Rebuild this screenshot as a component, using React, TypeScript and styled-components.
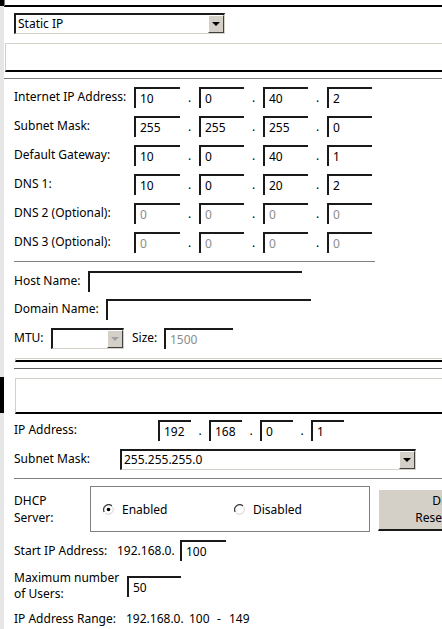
import React from 'react';
import styled, { createGlobalStyle } from 'styled-components';

const GlobalStyle = createGlobalStyle`
  html, body {
    margin: 0;
    padding: 0;
    background: #ffffff;
    overflow: hidden;
  }
  body {
    font-family: "Noto Sans", "Open Sans", sans-serif;
    font-size: 12px;
    color: #000000;
  }
`;

const Page = styled.div`
  display: flex;
  width: 442px;
  height: 629px;
  overflow: hidden;
`;

const Strip = styled.div`
  flex: none;
  width: 4px;
  background: #e6e6e6;
  display: flex;
  flex-direction: column;
`;

const StripMark = styled.div<{ $top: number; $h: number }>`
  margin-top: ${(p) => p.$top}px;
  height: ${(p) => p.$h}px;
  background: #000000;
`;

const Content = styled.div`
  flex: none;
  width: 640px;
  display: flex;
  flex-direction: column;
`;

const TopEdge = styled.div`
  height: 5px;
  border-left: 1px solid #808080;
  border-bottom: 2px solid #000000;
`;

const Panel = styled.div<{ $h: number; $left: number; $top: number }>`
  box-sizing: border-box;
  height: ${(p) => p.$h}px;
  margin-left: ${(p) => p.$left}px;
  margin-top: ${(p) => p.$top}px;
  border: 1px solid #d4d0c8;
  border-bottom: 2px solid #000000;
`;

const Rule = styled.div<{ $top: number; $left?: number; $w?: number; $color?: string }>`
  height: 1px;
  margin-top: ${(p) => p.$top}px;
  margin-left: ${(p) => p.$left ?? 0}px;
  width: ${(p) => (p.$w ? `${p.$w}px` : 'auto')};
  background: ${(p) => p.$color ?? '#808080'};
`;

const Row = styled.div<{ $top: number }>`
  display: flex;
  align-items: center;
  min-height: 21px;
  margin-top: ${(p) => p.$top}px;
  padding-left: 10px;
  white-space: nowrap;
`;

const Label = styled.div<{ $w: number; $lh?: number }>`
  flex: none;
  width: ${(p) => p.$w}px;
  line-height: ${(p) => p.$lh ?? 16}px;
`;

const Text = styled.span<{ $w?: number; $center?: boolean }>`
  flex: none;
  display: inline-block;
  width: ${(p) => (p.$w ? `${p.$w}px` : 'auto')};
  text-align: ${(p) => (p.$center ? 'center' : 'left')};
`;

const Field = styled.div<{ $w: number; $muted?: boolean }>`
  flex: none;
  box-sizing: border-box;
  width: ${(p) => p.$w}px;
  height: 21px;
  padding-left: 4px;
  display: flex;
  align-items: center;
  border-top: 2px solid #1a1a1a;
  border-left: 2px solid #1a1a1a;
  background: #ffffff;
  color: ${(p) => (p.$muted ? '#8c8c8c' : '#000000')};
`;

const Dot = styled.span<{ $w: number }>`
  flex: none;
  width: ${(p) => p.$w}px;
  text-align: center;
`;

const Select = styled.div<{ $w: number }>`
  flex: none;
  box-sizing: border-box;
  width: ${(p) => p.$w}px;
  height: 21px;
  display: flex;
  align-items: stretch;
  border-top: 2px solid #1a1a1a;
  border-left: 2px solid #1a1a1a;
  border-right: 1px solid #d4d0c8;
  border-bottom: 1px solid #d4d0c8;
  background: #ffffff;
`;

const SelectValue = styled.div`
  flex: 1;
  display: flex;
  align-items: center;
  padding-left: 2px;
`;

const ArrowButton = styled.div<{ $disabled?: boolean }>`
  flex: none;
  box-sizing: border-box;
  width: 16px;
  display: flex;
  align-items: center;
  justify-content: center;
  background: #d4d0c8;
  border-top: 1px solid #ffffff;
  border-left: 1px solid #ffffff;
  border-right: 1px solid #404040;
  border-bottom: 1px solid #404040;

  &::after {
    content: '';
    width: 0;
    height: 0;
    border-left: 4px solid transparent;
    border-right: 4px solid transparent;
    border-top: 4px solid ${(p) => (p.$disabled ? '#a0a0a0' : '#000000')};
  }
`;

const SizeLabel = styled(Label)`
  margin-left: 8px;
`;

const RadioBox = styled.div`
  flex: none;
  box-sizing: border-box;
  width: 280px;
  height: 46px;
  padding-left: 12px;
  display: flex;
  align-items: center;
  border: 1px solid #808080;
`;

const RadioOption = styled.label<{ $w?: number }>`
  display: flex;
  align-items: center;
  gap: 8px;
  width: ${(p) => (p.$w ? `${p.$w}px` : 'auto')};
`;

const ReserveButton = styled.div`
  flex: none;
  box-sizing: border-box;
  align-self: flex-start;
  width: 140px;
  height: 41px;
  margin-top: 3px;
  margin-left: 8px;
  display: flex;
  align-items: center;
  justify-content: center;
  text-align: center;
  line-height: 17px;
  background: #d4d0c8;
  border-left: 1px solid #ffffff;
  border-bottom: 2px solid #1a1a1a;
`;

const Radio = ({ checked }: { checked?: boolean }) => (
  <svg width="11" height="11" viewBox="0 0 11 11">
    <circle cx="5.5" cy="5.5" r="5" fill="#ffffff" />
    <path d="M9 2 A5 5 0 0 0 1.2 8" fill="none" stroke="#404040" strokeWidth="1.3" />
    <path d="M2 9 A5 5 0 0 0 9.8 3" fill="none" stroke="#d4d0c8" strokeWidth="1" />
    {checked && <circle cx="5.5" cy="5.5" r="1.8" fill="#000000" />}
  </svg>
);

type Octets = [string, string, string, string];

const wanRows: { label: string; values: Octets; muted?: boolean }[] = [
  { label: 'Internet IP Address:', values: ['10', '0', '40', '2'] },
  { label: 'Subnet Mask:', values: ['255', '255', '255', '0'] },
  { label: 'Default Gateway:', values: ['10', '0', '40', '1'] },
  { label: 'DNS 1:', values: ['10', '0', '20', '2'] },
  { label: 'DNS 2 (Optional):', values: ['0', '0', '0', '0'], muted: true },
  { label: 'DNS 3 (Optional):', values: ['0', '0', '0', '0'], muted: true },
];

const IpFields = ({
  values,
  widths,
  dot,
  muted,
}: {
  values: Octets;
  widths: number[];
  dot: number;
  muted?: boolean;
}) => (
  <>
    {values.map((v, i) => (
      <React.Fragment key={i}>
        {i > 0 && <Dot $w={dot}>.</Dot>}
        <Field $w={widths[i]} $muted={muted}>
          {v}
        </Field>
      </React.Fragment>
    ))}
  </>
);

export default function App() {
  return (
    <Page>
      <GlobalStyle />
      <Strip>
        <StripMark $top={0} $h={6} />
        <StripMark $top={371} $h={36} />
      </Strip>
      <Content>
        <TopEdge />
        <Row $top={6}>
          <Select $w={211}>
            <SelectValue>Static IP</SelectValue>
            <ArrowButton />
          </Select>
        </Row>
        <Panel $h={29} $left={1} $top={9} />
        <Rule $top={6} />

        {wanRows.map((r) => (
          <Row key={r.label} $top={8}>
            <Label $w={120}>{r.label}</Label>
            <IpFields values={r.values} widths={[46, 45, 45, 45]} dot={19} muted={r.muted} />
          </Row>
        ))}
        <Rule $top={8} $left={10} $w={361} />

        <Row $top={9}>
          <Label $w={74}>Host Name:</Label>
          <Field $w={214} />
        </Row>
        <Row $top={7}>
          <Label $w={92}>Domain Name:</Label>
          <Field $w={205} />
        </Row>
        <Row $top={8}>
          <Label $w={37}>MTU:</Label>
          <Select $w={73}>
            <SelectValue />
            <ArrowButton $disabled />
          </Select>
          <SizeLabel $w={32}>Size:</SizeLabel>
          <Field $w={69} $muted>
            1500
          </Field>
        </Row>

        <Panel $h={4} $left={11} $top={9} />
        <Rule $top={6} $left={10} $color="#666666" />
        <Panel $h={36} $left={11} $top={9} />

        <Row $top={6}>
          <Label $w={144}>IP Address:</Label>
          <IpFields values={['192', '168', '0', '1']} widths={[33, 33, 33, 33]} dot={18} />
        </Row>
        <Row $top={8}>
          <Label $w={106}>Subnet Mask:</Label>
          <Select $w={296}>
            <SelectValue>255.255.255.0</SelectValue>
            <ArrowButton />
          </Select>
        </Row>
        <Rule $top={8} $left={10} />

        <Row $top={8}>
          <Label $w={76} $lh={17}>
            DHCP
            <br />
            Server:
          </Label>
          <RadioBox>
            <RadioOption $w={131}>
              <Radio checked />
              Enabled
            </RadioOption>
            <RadioOption>
              <Radio />
              Disabled
            </RadioOption>
          </RadioBox>
          <ReserveButton>
            DHCP
            <br />
            Reservation
          </ReserveButton>
        </Row>

        <Row $top={8}>
          <Label $w={103}>Start IP Address:</Label>
          <Text $w={63}>192.168.0.</Text>
          <Field $w={46}>100</Field>
        </Row>
        <Row $top={9}>
          <Label $w={113}>
            Maximum number
            <br />
            of Users:
          </Label>
          <Field $w={54}>50</Field>
        </Row>
        <Row $top={6}>
          <Label $w={112}>IP Address Range:</Label>
          <Text $w={63}>192.168.0.</Text>
          <Text $w={20}>100</Text>
          <Text $w={20} $center>
            -
          </Text>
          <Text>149</Text>
        </Row>
      </Content>
    </Page>
  );
}
